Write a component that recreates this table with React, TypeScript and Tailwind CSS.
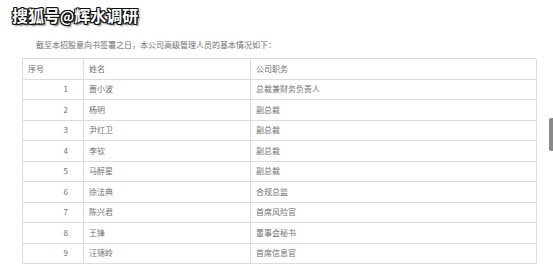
import React from "react";

const rows: [string, string, string][] = [
  ["1", "蔷小波", "总裁兼财务负责人"],
  ["2", "杨明", "副总裁"],
  ["3", "尹红卫", "副总裁"],
  ["4", "李钦", "副总裁"],
  ["5", "马醉星", "副总裁"],
  ["6", "徐法典", "合规总监"],
  ["7", "陈兴君", "首席风险官"],
  ["8", "王锋", "董事会秘书"],
  ["9", "汪锦岭", "首席信息官"],
];

export default function App() {
  return (
    <div
      className="relative w-[553px] h-[275px] bg-white overflow-hidden"
      style={{ fontFamily: '"Noto Sans CJK SC", "Noto Sans", sans-serif' }}
    >
      <div className="pl-[12px] pt-[5px] h-[30px] text-[16px] font-bold leading-[20px] text-white [text-shadow:1px_1px_0_#111,-1px_-1px_0_#111,1px_-1px_0_#111,-1px_1px_0_#111,0_1px_0_#111,0_-1px_0_#111,1px_0_0_#111,-1px_0_0_#111,2px_2px_2px_#555]">
        搜狐号<span className="text-[14px]">@</span>辉水调研
      </div>
      <div className="pl-[36px] h-[28px] pt-[10px] text-[8px] leading-[10px] text-[#707070]">
        截至本招股意向书签署之日，本公司高级管理人员的基本情况如下：
      </div>
      <div className="ml-[22px] w-[514px] border-t border-l border-[#dcdcdc] text-[8px] text-[#707070]">
        <div className="grid grid-cols-[61px_167px_286px] h-[20.5px] border-b border-[#dcdcdc]">
          <div className="border-r border-[#dcdcdc] pl-[5px] flex items-center">序号</div>
          <div className="border-r border-[#dcdcdc] pl-[5px] flex items-center">姓名</div>
          <div className="border-r border-[#dcdcdc] pl-[5px] flex items-center">公司职务</div>
        </div>
        {rows.map((r) => (
          <div
            key={r[0]}
            className="grid grid-cols-[61px_167px_286px] h-[20.5px] border-b border-[#dcdcdc]"
          >
            <div className="border-r border-[#dcdcdc] pr-[15px] flex items-center justify-end">
              {r[0]}
            </div>
            <div className="border-r border-[#dcdcdc] pl-[5px] flex items-center">{r[1]}</div>
            <div className="border-r border-[#dcdcdc] pl-[5px] flex items-center">{r[2]}</div>
          </div>
        ))}
      </div>
      <div className="absolute left-[549px] top-[118px] w-[5px] h-[33px] rounded-l-[2px] bg-[#8a8a8a]" />
    </div>
  );
}
